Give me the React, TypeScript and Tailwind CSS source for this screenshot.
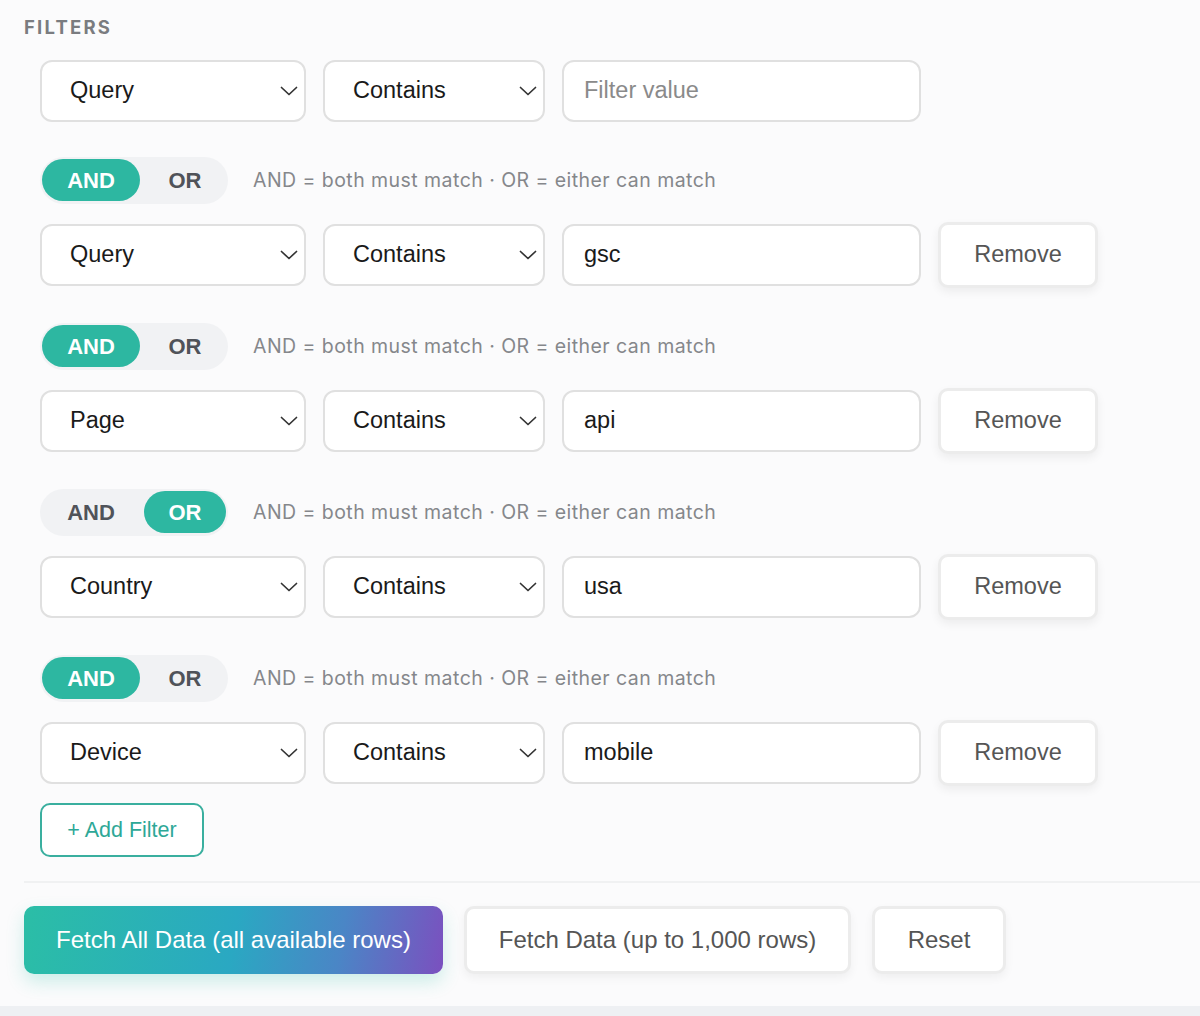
import { Fragment } from 'react';

const filters = [
  { field: 'Query', op: 'Contains', value: '', logic: null as null | 'AND' | 'OR', removable: false },
  { field: 'Query', op: 'Contains', value: 'gsc', logic: 'AND' as const, removable: true },
  { field: 'Page', op: 'Contains', value: 'api', logic: 'AND' as const, removable: true },
  { field: 'Country', op: 'Contains', value: 'usa', logic: 'OR' as const, removable: true },
  { field: 'Device', op: 'Contains', value: 'mobile', logic: 'AND' as const, removable: true },
];

function Chevron() {
  return (
    <svg width="18" height="10" viewBox="0 0 18 10" fill="none" className="shrink-0">
      <path d="M1.5 1.5 L9 8.5 L16.5 1.5" stroke="#333" strokeWidth="1.7" strokeLinecap="round" strokeLinejoin="round" />
    </svg>
  );
}

function Select({ label, width }: { label: string; width: string }) {
  return (
    <div
      className={`${width} h-[62px] flex items-center justify-between pl-[28px] pr-[6px] bg-white border-2 border-[#e0e0e0] rounded-[12px] text-[23.5px] text-[#1a1a1a]`}
    >
      <span>{label}</span>
      <Chevron />
    </div>
  );
}

function LogicToggle({ logic }: { logic: 'AND' | 'OR' }) {
  return (
    <div className="flex items-center gap-[25px] mt-[35px] mb-[18px]">
      <div className="w-[188px] h-[47px] rounded-full bg-[#f1f2f4] p-[2px] flex items-center">
        <div
          className={`w-[98px] h-[42px] rounded-full flex items-center justify-center text-[22px] font-bold ${
            logic === 'AND' ? 'bg-[#2db7a1] text-white' : 'text-[#505359]'
          }`}
        >
          AND
        </div>
        <div
          className={`w-[82px] ml-[4px] h-[42px] rounded-full flex items-center justify-center text-[22px] font-bold ${
            logic === 'OR' ? 'bg-[#2db7a1] text-white' : 'text-[#505359]'
          }`}
        >
          OR
        </div>
      </div>
      <span className="text-[19.5px] text-[#85878b] tracking-[0.45px] font-['Inter',sans-serif]">
        AND = both must match · OR = either can match
      </span>
    </div>
  );
}

export default function App() {
  return (
    <div className="w-[1200px] h-[1016px] bg-[#fbfbfc] font-['Liberation_Sans',Arial,sans-serif] overflow-hidden flex flex-col">
      <div className="flex-1 flex flex-col">
        {/* Filters */}
        <div className="pl-[24px] pt-[14px] text-[18.5px] font-bold tracking-[2.2px] text-[#7a7c80] font-['Inter',sans-serif]">
          FILTERS
        </div>
        <div className="pl-[40px] pt-[18px] flex flex-col">
          {filters.map((f, i) => (
            <Fragment key={i}>
              {f.logic && <LogicToggle logic={f.logic} />}
              <div className="flex items-center gap-[17px]">
                <Select label={f.field} width="w-[266px]" />
                <Select label={f.op} width="w-[222px]" />
                <div className="w-[359px] h-[62px] flex items-center px-[20px] bg-white border-2 border-[#e0e0e0] rounded-[12px] text-[23.5px]">
                  {f.value ? (
                    <span className="text-[#1a1a1a]">{f.value}</span>
                  ) : (
                    <span className="text-[#8a8a8a]">Filter value</span>
                  )}
                </div>
                {f.removable && (
                  <button className="w-[160px] h-[66px] bg-white border-[3px] border-[#ececec] rounded-[10px] text-[23.5px] text-[#555] shadow-[0_4px_10px_rgba(0,0,0,0.06)]">
                    Remove
                  </button>
                )}
              </div>
            </Fragment>
          ))}
          <button className="mt-[17px] w-[164px] h-[54px] border-2 border-[#3aaf9f] rounded-[10px] bg-white text-[21.5px] text-[#2ea897]">
            + Add Filter
          </button>
        </div>

        {/* Actions */}
        <div className="ml-[24px] mt-[24px] border-t-2 border-[#f0f1f2] pt-[23px] flex items-center gap-[21px]">
          <button className="w-[419px] h-[68px] rounded-[10px] text-white text-[24px] bg-[linear-gradient(100deg,#2bbea6_0%,#2aa8c2_50%,#4a86c6_75%,#7b50bf_100%)] shadow-[0_8px_18px_rgba(43,190,166,0.22)]">
            Fetch All Data (all available rows)
          </button>
          <button className="w-[387px] h-[68px] rounded-[10px] bg-white border-[3px] border-[#ececec] text-[24px] text-[#555] shadow-[0_4px_10px_rgba(0,0,0,0.05)]">
            Fetch Data (up to 1,000 rows)
          </button>
          <button className="w-[134px] h-[68px] rounded-[10px] bg-white border-[3px] border-[#ececec] text-[24px] text-[#555] shadow-[0_4px_10px_rgba(0,0,0,0.05)]">
            Reset
          </button>
        </div>
      </div>
      <div className="h-[10px] bg-[#eef0f3] shrink-0" />
    </div>
  );
}
